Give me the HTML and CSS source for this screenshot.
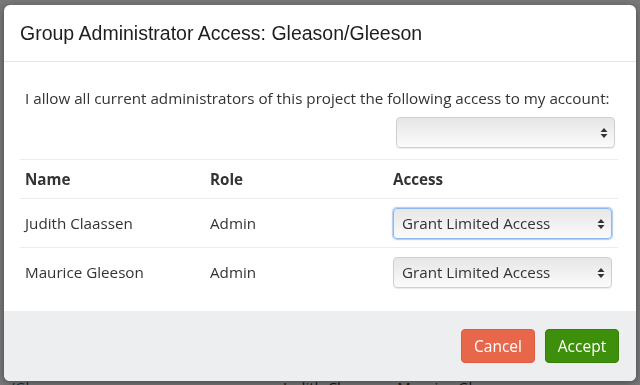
FILE: index.html
```html
<!DOCTYPE html>
<html lang="en">
<head>
  <meta charset="UTF-8" />
  <title>Group Administrator Access</title>
  <link rel="stylesheet" href="styles.css">
</head>
<body>

<!-- page behind the dialog -->
<div class="page">
  <div class="page-row"><span class="page-link">n/Gleeson</span><span class="page-text">Judith Claassen, Maurice Gleeson</span></div>
</div>

<div class="overlay">
  <div class="modal">
    <div class="modal-header">
      <h4>Group Administrator Access: Gleason/Gleeson</h4>
    </div>

    <div class="modal-body">
      <p class="intro">I allow all current administrators of this project the following access to my account:</p>
      <div class="all-access">
        <div class="select-wrap">
          <select><option></option></select>
          <svg class="arrows" width="8" height="12" viewBox="0 0 8 12"><path d="M4 1 L7.5 5 H0.5 Z M4 11 L7.5 7 H0.5 Z" fill="#333"/></svg>
        </div>
      </div>

      <table class="admins">
        <thead>
          <tr><th>Name</th><th>Role</th><th>Access</th></tr>
        </thead>
        <tbody>
          <tr>
            <td>Judith Claassen</td>
            <td>Admin</td>
            <td>
              <div class="select-wrap">
                <select class="focused"><option>Grant Limited Access</option></select>
                <svg class="arrows" width="8" height="12" viewBox="0 0 8 12"><path d="M4 1 L7.5 5 H0.5 Z M4 11 L7.5 7 H0.5 Z" fill="#333"/></svg>
              </div>
            </td>
          </tr>
          <tr>
            <td>Maurice Gleeson</td>
            <td>Admin</td>
            <td>
              <div class="select-wrap">
                <select><option>Grant Limited Access</option></select>
                <svg class="arrows" width="8" height="12" viewBox="0 0 8 12"><path d="M4 1 L7.5 5 H0.5 Z M4 11 L7.5 7 H0.5 Z" fill="#333"/></svg>
              </div>
            </td>
          </tr>
        </tbody>
      </table>
    </div>

    <div class="modal-footer">
      <button class="btn btn-cancel">Cancel</button>
      <button class="btn btn-accept">Accept</button>
    </div>
  </div>
</div>

</body>
</html>
```

FILE: styles.css
```css
* {
  box-sizing: border-box;
}
html, body {
  margin: 0;
  padding: 0;
  height: 100%;
  font-family: 'Open Sans', 'Liberation Sans', sans-serif;
  color: #333;
  background: #fff;
  overflow: hidden;
}

.page {
  height: 100%;
  display: flex;
  flex-direction: column;
  justify-content: flex-end;
}
.page-row {
  display: flex;
  font-size: 15px;
  line-height: 20px;
  margin-bottom: -12px;
}
.page-link {
  color: #2a6496;
  text-decoration: underline;
  width: 283px;
}

.overlay {
  position: fixed;
  inset: 0;
  background: rgba(0, 0, 0, 0.53);
  padding: 5px 4px 4px 4px;
}

.modal {
  background: #fff;
  border-radius: 6px;
  height: 376px;
  display: flex;
  flex-direction: column;
  overflow: hidden;
  box-shadow: 0 2px 8px rgba(0, 0, 0, 0.4);
}

.modal-header {
  height: 57px;
  padding: 0 16px;
  border-bottom: 1px solid #e5e5e5;
  display: flex;
  align-items: center;
}
.modal-header h4 {
  margin: 0;
  font-family: 'Liberation Sans', Arial, sans-serif;
  font-weight: normal;
  font-size: 19.5px;
  color: #1e1e1e;
}

.modal-body {
  flex: 1;
  padding: 0 16px;
}
.intro {
  margin: 26px 0 0 5px;
  font-size: 15.2px;
  line-height: 20px;
}

.all-access {
  display: flex;
  justify-content: flex-end;
  padding: 9px 5px 0 0;
  height: 42px;
}

.select-wrap {
  position: relative;
  width: 219px;
  height: 31px;
}
.select-wrap select {
  appearance: none;
  width: 100%;
  height: 100%;
  margin: 0;
  border: 1px solid #cfcfcf;
  border-radius: 4px;
  background: linear-gradient(#e6e6e6, #fbfbfb);
  font-family: 'Open Sans', sans-serif;
  font-size: 15.2px;
  color: #333;
  padding: 0 8px;
  box-shadow: 0 1px 1px rgba(0, 0, 0, 0.08);
}
.select-wrap select.focused {
  border-color: #8cb9ec;
  box-shadow: 0 0 0 1px #b5d3f5, 0 0 3px #a9cdf5;
}
.arrows {
  position: absolute;
  right: 7px;
  top: 10px;
  pointer-events: none;
}

.admins {
  width: 598px;
  margin-top: 9px;
  border-collapse: collapse;
  font-size: 15.2px;
}
.admins th, .admins td {
  text-align: left;
  padding: 0 5px;
  border-top: 1px solid #ececec;
}
.admins th {
  height: 39px;
  font-weight: bold;
}
.admins td {
  height: 49px;
}
.admins th:nth-child(1) { width: 185px; }
.admins th:nth-child(2) { width: 183px; }

.modal-footer {
  height: 70px;
  background: #eceeef;
  display: flex;
  justify-content: flex-end;
  align-items: flex-start;
  gap: 10px;
  padding: 18px 17px 0 0;
}
.btn {
  height: 34px;
  width: 74px;
  border-radius: 4px;
  border: 1px solid transparent;
  color: #fff;
  font-family: 'Open Sans', sans-serif;
  font-size: 15.5px;
  cursor: pointer;
}
.btn-cancel {
  background: #e8674b;
  border-color: #df5c40;
}
.btn-accept {
  background: #3e8f0b;
  border-color: #377f09;
}
```
